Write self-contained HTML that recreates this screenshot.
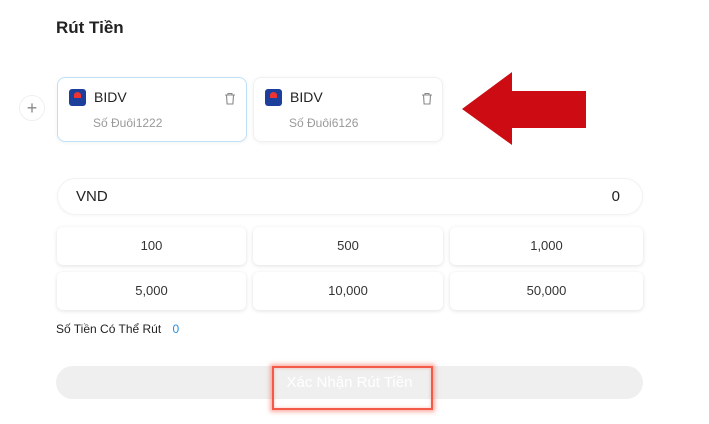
<!DOCTYPE html>
<html><head><meta charset="utf-8"><style>
*{margin:0;padding:0;box-sizing:border-box}
body{width:709px;height:424px;background:#fff;font-family:"Liberation Sans",Arial,sans-serif;position:relative;overflow:hidden;color:#222}
.a{position:absolute}
.card{position:absolute;top:77px;width:190px;height:65px;border-radius:8px;border:1px solid #f0f0f0;box-shadow:0 1px 4px rgba(0,0,0,.05);background:#fff}
.card.sel{border-color:#bfe0f7}
.logo{position:absolute;left:11px;top:11px;width:17px;height:17px;border-radius:3px;background:#1b3f9a}
.logo:before{content:"";position:absolute;left:5px;top:3px;width:7px;height:6px;background:#e33;border-radius:50% 50% 0 0}
.bank{position:absolute;left:36px;top:11px;font-size:14px;color:#222}
.num{position:absolute;left:35px;top:38px;font-size:12px;color:#999}
.btn{position:absolute;height:38px;background:#fff;border-radius:6px;box-shadow:0 1px 4px rgba(0,0,0,.12);font-size:13px;color:#333;text-align:center;line-height:38px}
</style></head><body>
<div class="a" style="left:56px;top:18px;font-size:17px;font-weight:bold;color:#222">Rút Tiền</div>
<div class="a" style="left:19px;top:95px;width:26px;height:26px;border-radius:50%;border:1px solid #f0f0f0;text-align:center;line-height:24px;font-size:18px;color:#888">+</div>
<div class="card sel" style="left:57px"><div class="logo"></div><div class="bank">BIDV</div><div class="num">Số Đuôi1222</div>
<svg class="a" style="left:166px;top:14px" width="12" height="13" viewBox="0 0 12 13" fill="none" stroke="#888" stroke-width="1.1"><path d="M1 3h10M4 3V1.5h4V3M2.5 3l.6 9h5.8l.6-9"/></svg></div>
<div class="card" style="left:253px"><div class="logo"></div><div class="bank">BIDV</div><div class="num">Số Đuôi6126</div>
<svg class="a" style="left:167px;top:14px" width="12" height="13" viewBox="0 0 12 13" fill="none" stroke="#888" stroke-width="1.1"><path d="M1 3h10M4 3V1.5h4V3M2.5 3l.6 9h5.8l.6-9"/></svg></div>
<svg class="a" style="left:0;top:0" width="709" height="200"><polygon points="462,109 512,72 512,91 586,91 586,128 512,128 512,145" fill="#cc0c12"/></svg>
<div class="a" style="left:57px;top:178px;width:586px;height:37px;border-radius:19px;border:1px solid #f2f2f2;box-shadow:0 1px 3px rgba(0,0,0,.04)">
<span class="a" style="left:18px;top:9px;font-size:15px;color:#222">VND</span><span class="a" style="right:22px;top:9px;font-size:15px;color:#222">0</span></div>
<div class="btn" style="left:57px;top:227px;width:189px">100</div>
<div class="btn" style="left:253px;top:227px;width:190px">500</div>
<div class="btn" style="left:450px;top:227px;width:193px">1,000</div>
<div class="btn" style="left:57px;top:272px;width:189px">5,000</div>
<div class="btn" style="left:253px;top:272px;width:190px">10,000</div>
<div class="btn" style="left:450px;top:272px;width:193px">50,000</div>
<div class="a" style="left:56px;top:322px;font-size:12px;color:#222">Số Tiền Có Thể Rút <span style="color:#2a8ee0;margin-left:8px">0</span></div>
<div class="a" style="left:56px;top:366px;width:587px;height:33px;border-radius:17px;background:#efefef;text-align:center;line-height:33px;font-size:15px;color:#fff">Xác Nhận Rút Tiền</div>
<div class="a" style="left:272px;top:366px;width:161px;height:44px;border:2px solid #f45a48;box-shadow:0 0 4px 2px rgba(245,100,80,.5),inset 0 0 3px rgba(245,100,80,.4)"></div>
</body></html>
